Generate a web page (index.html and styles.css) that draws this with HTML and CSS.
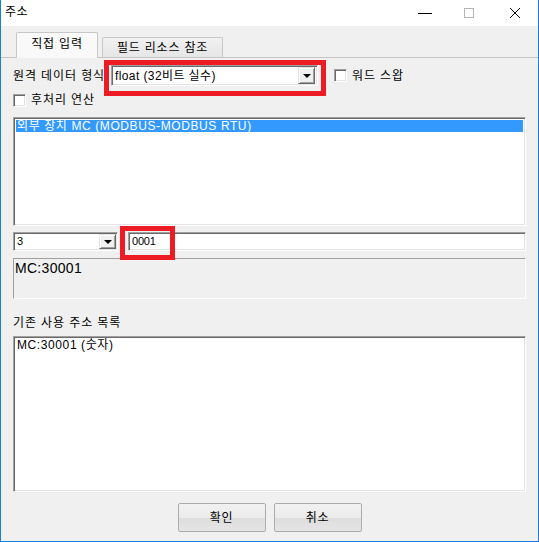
FILE: index.html
```html
<!DOCTYPE html>
<html lang="ko">
<head>
<meta charset="utf-8">
<link rel="stylesheet" href="styles.css">
</head>
<body>
<div class="window">
  <div class="titlebar">
    <span class="title">주소</span>
    <div class="controls">
      <svg class="ctl" width="46" height="26" viewBox="0 0 46 26"><path d="M18 13.5h14" stroke="#000" stroke-width="1"/></svg>
      <svg class="ctl" width="46" height="26" viewBox="0 0 46 26"><rect x="18.5" y="8.5" width="9" height="9" fill="none" stroke="#b5b5b5" stroke-width="1"/></svg>
      <svg class="ctl" width="46" height="26" viewBox="0 0 46 26"><path d="M18 8l10 10M28 8l-10 10" stroke="#000" stroke-width="1"/></svg>
    </div>
  </div>
  <div class="client">
    <div class="tabs">
      <div class="tab active">직접 입력</div>
      <div class="tab">필드 리소스 참조</div>
    </div>
    <div class="panel">
      <div class="row r1">
        <span class="label lbl-type">원격 데이터 형식</span>
        <div class="combo combo-type sunken">
          <span class="combo-text">float (32비트 실수)</span>
          <span class="drop"><span class="arrow"></span></span>
        </div>
        <div class="check check-swap"><span class="box sunken"></span><span class="label">워드 스왑</span></div>
      </div>
      <div class="row r2">
        <div class="check"><span class="box sunken"></span><span class="label">후처리 연산</span></div>
      </div>
      <div class="listbox list-dev sunken">
        <div class="item selected">외부 장치 MC (MODBUS-MODBUS RTU)</div>
      </div>
      <div class="row r3">
        <div class="combo combo-num sunken">
          <span class="combo-text small">3</span>
          <span class="drop"><span class="arrow"></span></span>
        </div>
        <div class="edit sunken"><span class="small">0001</span></div>
      </div>
      <div class="static">MC:30001</div>
      <div class="label lbl-list">기존 사용 주소 목록</div>
      <div class="listbox list-used sunken">
        <div class="item">MC:30001 (숫자)</div>
      </div>
    </div>
    <div class="buttons">
      <div class="btn">확인</div>
      <div class="btn">취소</div>
    </div>
  </div>
  <div class="mark mark-type"></div>
  <div class="mark mark-addr"></div>
</div>
</body>
</html>
```

FILE: styles.css
```css
html, body {
  margin: 0;
  padding: 0;
  background: #ffffff;
}
body {
  font-family: "Liberation Sans", "Noto Sans CJK KR", sans-serif;
  font-size: 12px;
  color: #000;
}
.window {
  position: relative;
  width: 537px;
  height: 541px;
  border-left: 1px solid #1a7fd8;
  border-right: 1px solid #1a7fd8;
  border-bottom: 1px solid #1a7fd8;
  display: flex;
  flex-direction: column;
  background: #f0f0f0;
}
.titlebar {
  height: 26px;
  background: #fff;
  display: flex;
  align-items: center;
  justify-content: space-between;
  flex: none;
}
.title {
  padding-left: 4px;
  font-size: 12px;
  line-height: 14px;
  margin-top: -3px;
  letter-spacing: 0.5px;
}
.controls {
  display: flex;
  align-self: flex-start;
}
.ctl { display: block; }

.client {
  flex: 1;
  display: flex;
  flex-direction: column;
  background: #f0f0f0;
}
.tabs {
  display: flex;
  align-items: flex-end;
  height: 32px;
  padding-left: 15px;
  box-sizing: border-box;
  border-bottom: 1px solid #c4c4c4;
  flex: none;
}
.tab {
  height: 20px;
  box-sizing: border-box;
  border: 1px solid #c8c8c8;
  border-bottom: none;
  border-radius: 2px 2px 0 0;
  background: linear-gradient(#f1f1f1, #e6e6e6);
  padding: 3px 0 0 0;
  line-height: 14px;
  margin-left: 4px;
  width: 121px;
  text-align: center;
  position: relative;
  letter-spacing: 0.8px;
}
.tab.active {
  height: 26px;
  width: 82px;
  margin-left: 0;
  margin-bottom: -1px;
  background: #f9f9f9;
  padding-top: 4px;
  border-color: #c8c8c8;
}
.panel {
  padding: 0 12px 0 12px;
  display: flex;
  flex-direction: column;
  flex: none;
}
.row {
  display: flex;
  align-items: center;
}
.r1 { margin-top: 7px; height: 21px; }
.lbl-type { width: 98px; white-space: nowrap; }
.label { line-height: 14px; white-space: nowrap; letter-spacing: 0.9px; }

.sunken {
  box-sizing: border-box;
  border: 1px solid;
  border-color: #a0a0a0 #ffffff #ffffff #a0a0a0;
  box-shadow: inset 1px 1px 0 #696969, inset -1px -1px 0 #e3e3e3;
  background: #fff;
}
.combo {
  height: 21px;
  display: flex;
  align-items: center;
  justify-content: space-between;
  padding: 2px 2px 2px 3px;
}
.combo-type { width: 207px; }
.combo-text { line-height: 14px; letter-spacing: 0.4px; }
.drop {
  width: 17px;
  height: 17px;
  box-sizing: border-box;
  border: 1px solid;
  border-color: #e3e3e3 #696969 #696969 #e3e3e3;
  box-shadow: inset 1px 1px 0 #fff, inset -1px -1px 0 #a0a0a0;
  background: #f0f0f0;
  display: flex;
  align-items: center;
  justify-content: center;
}
.arrow {
  width: 0;
  height: 0;
  border-left: 4px solid transparent;
  border-right: 4px solid transparent;
  border-top: 4px solid #000;
  margin-top: 1px;
}
.check {
  display: flex;
  align-items: center;
}
.check-swap { margin-left: 16px; }
.box {
  width: 13px;
  height: 13px;
  margin-right: 5px;
  flex: none;
}
.r2 { margin-top: 7px; height: 14px; }

.listbox {
  padding: 2px;
}
.list-dev {
  margin-top: 10px;
  height: 109px;
}
.item {
  line-height: 12px;
  height: 12px;
  padding-left: 1px;
  white-space: nowrap;
  letter-spacing: 0.6px;
}
.item.selected {
  background: #3399ff;
  color: #fff;
}
.r3 {
  margin-top: 6px;
  height: 19px;
}
.combo-num {
  width: 105px;
  height: 19px;
  padding: 2px 1px 2px 3px;
}
.combo-num .drop { height: 15px; width: 17px; }
.small { font-family: "Liberation Sans", sans-serif; font-size: 11px; line-height: 13px; letter-spacing: -0.2px; }
.edit {
  flex: 1;
  height: 19px;
  margin-left: 10px;
  padding: 1px 3px;
  display: flex;
  align-items: center;
}
.static {
  margin-top: 7px;
  height: 41px;
  box-sizing: border-box;
  border: 1px solid;
  border-color: #a0a0a0 #ffffff #ffffff #a0a0a0;
  padding: 1px 1px;
  font-family: "Liberation Sans", sans-serif;
  font-size: 14px;
  line-height: 16px;
  letter-spacing: 0.3px;
}
.lbl-list {
  margin-top: 17px;
  height: 14px;
}
.list-used {
  margin-top: 6px;
  height: 156px;
}
.buttons {
  display: flex;
  justify-content: center;
  gap: 8px;
  margin-top: 11px;
}
.btn {
  width: 88px;
  height: 29px;
  box-sizing: border-box;
  border: 1px solid #adadad;
  border-radius: 2px;
  background: linear-gradient(#f2f2f2 0%, #ebebeb 50%, #dddddd 51%, #e5e5e5 100%);
  display: flex;
  align-items: center;
  justify-content: center;
  line-height: 14px;
  letter-spacing: 0.8px;
}
.mark {
  position: absolute;
  border: 5px solid #ed1c24;
  box-sizing: border-box;
}
.mark-type {
  left: 103px;
  top: 60px;
  width: 222px;
  height: 36px;
}
.mark-addr {
  left: 119px;
  top: 226px;
  width: 55px;
  height: 34px;
}
```
